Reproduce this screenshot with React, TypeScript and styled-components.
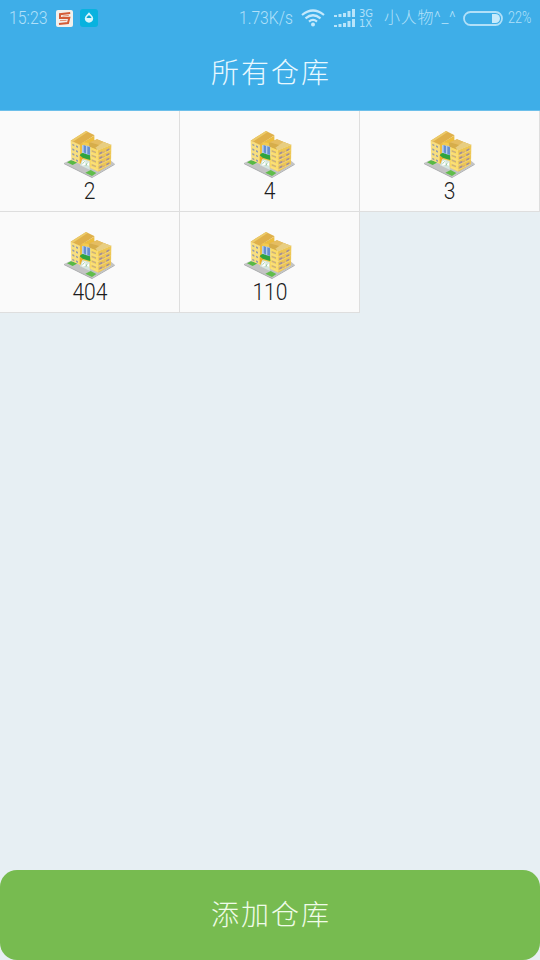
import React from "react";
import styled, { createGlobalStyle } from "styled-components";

const GlobalStyle = createGlobalStyle`
  * { box-sizing: border-box; }
  body { margin: 0; background: #e7eff3; }
`;

const Screen = styled.div`
  display: flex;
  flex-direction: column;
  width: 540px;
  height: 960px;
  overflow: hidden;
  background: #e7eff3;
  font-family: Roboto, "Noto Sans CJK SC", sans-serif;
  font-weight: 300;
`;

const Header = styled.header`
  flex: none;
  height: 111px;
  background: #3eaee8;
  border-bottom: 1px solid #6cbfea;
`;

const StatusBar = styled.div`
  display: flex;
  align-items: center;
  height: 36px;
  padding: 0 9px;
  color: #b1e0f9;
`;

const StatusText = styled.span<{
  $width: number;
  $size?: number;
  $gap?: number;
  $track?: number;
  $narrow?: number;
}>`
  flex: none;
  width: ${(p) => p.$width}px;
  margin-right: ${(p) => p.$gap ?? 0}px;
  font-size: ${(p) => p.$size ?? 18}px;
  letter-spacing: ${(p) => p.$track ?? 0}px;
  line-height: 36px;
  white-space: nowrap;
  transform: scaleX(${(p) => p.$narrow ?? 1});
  transform-origin: left center;
`;

const StatusIcon = styled.svg<{ $gap?: number }>`
  flex: none;
  display: block;
  margin-right: ${(p) => p.$gap ?? 0}px;
`;

const Spacer = styled.div`
  flex: 1;
`;

const Network = styled.div`
  display: grid;
  grid-template-rows: 10px 10px;
  width: 25px;
  padding-top: 1px;
  font-family: "DejaVu Sans", sans-serif;
  font-weight: 400;
  font-size: 10px;
  line-height: 10px;
`;

const Title = styled.h1`
  margin: 0;
  padding: 2px 0 0 2px;
  height: 74px;
  line-height: 72px;
  text-align: center;
  font-size: 28px;
  font-weight: 300;
  letter-spacing: 2px;
  color: #e9f8ff;
`;

const Grid = styled.main`
  flex: 1;
  display: grid;
  grid-template-columns: repeat(3, 180px);
  grid-auto-rows: 101px;
  align-content: start;
`;

const Cell = styled.div`
  display: flex;
  flex-direction: column;
  align-items: center;
  padding: 19px 1px 0 0;
  background: #fafafa;
  border-right: 1px solid #dedede;
  border-bottom: 1px solid #dedede;
`;

const Label = styled.span`
  margin: 1px 0 0 2px;
  font-size: 24px;
  line-height: 24px;
  transform: scaleX(0.88);
  color: #1c1c1c;
`;

const AddButton = styled.button`
  flex: none;
  height: 90px;
  padding: 0 0 5px 2px;
  border: 0;
  border-radius: 17px;
  background: #77bb50;
  color: #f0fbe8;
  font: inherit;
  font-size: 28px;
  letter-spacing: 2px;
`;

const floors = [0, 1, 2, 3];

function Building() {
  return (
    <svg width="52" height="48" viewBox="25 25 156 144">
      <path d="M28 124 L52 113 L170 118 L180 126 L114 165 L104 164 Z" fill="#c3c4c4" />
      <path d="M28 124 L104 162 L114 165 L180 126 L180 129 L112 169 L28 127 Z" fill="#a5a7a9" />
      <path d="M37 122 L49 116 L69 122 L54 130 Z" fill="#57b944" />
      <path d="M92 153 L108 145 L125 154 L112 163 Z" fill="#61bd4a" />
      <path d="M48 57 L75 68 L77 128 L50 114 Z" fill="#f8df80" />
      <path d="M75 68 L119 42 L120 115 L77 128 Z" fill="#ecbd3e" />
      <path d="M48 57 L94 28 L120 41 L75 69 Z" fill="#dfb04a" />
      <path d="M48 57 L94 28 L99 31 L55 60 Z" fill="#ecca69" />
      <path d="M84 62 L109 65 L127 81 L127 145 L77 126 Z" fill="#f3cb50" />
      <path d="M82 70 L109 74 L109 105 L82 95 Z" fill="#b4cdea" />
      <path d="M87 70 L94 73 V96 L87 92 Z M98 74 L106 77 V100 L98 97 Z" fill="#668fd0" />
      <path d="M102 64 L127 53 L167 69 L127 84 L104 75 Z" fill="#d6ad4a" />
      <path d="M105 62 L127 53 L162 67 L141 72 Z" fill="#e5bd61" />
      <path d="M122 78 L146 61 L171 69 L131 86 Z" fill="#e8ce82" />
      <path d="M107 76 L130 86 L131 150 L107 139 Z" fill="#fbdc69" />
      <path d="M130 86 L170 69 L169 128 L131 150 Z" fill="#edc653" />
      <path d="M75 103 L86 106 L86 128 L75 124 Z" fill="#efae2b" />
      <path d="M83 112 L105 118 L105 144 L76 131 Z" fill="#d5e5df" />
      <path d="M75 101 Q81 91 91 96 L106 101 L107 115 L98 113 L84 108 Z" fill="#30a43e" />
      <path d="M83 119 L92 116 V129 L83 132 Z M96 121 L103 124 V132 L96 129 Z" fill="#ffffff" />
      <path d="M84 126 L90 119 M94 132 L98 123" stroke="#79ba79" strokeWidth="2" />
      {floors.map((i) => (
        <g key={i} fill="#949bab">
          <path d={`M53 ${66 + i * 14} l6 3 v5 l-6 -3z`} />
          <path d={`M64 ${71 + i * 14} l6 3 v5 l-6 -3z`} />
        </g>
      ))}
      {floors.map((i) => (
        <g key={i}>
          <path d={`M111 ${85 + i * 14} l13 5 v5 l-13 -5z`} fill="#cbb27d" />
          <path d={`M134 ${93 + i * 14} l9 -4 v6 l-9 4z M155 ${84 + i * 14} l9 -4 v5 l-9 5z`} fill="#a08d9c" />
          <path d={`M144 ${91 + i * 14} l7 -3 v5 l-7 3z`} fill="#d2ab7c" />
          <path d={`M108 ${94 + i * 14} l22 9 l38 -18`} fill="none" stroke="#f7e395" strokeWidth="1.6" />
        </g>
      ))}
    </svg>
  );
}

const warehouses = ["2", "4", "3", "404", "110"];
const signalBars = [2, 3, 4, 6, 8];

export default function App() {
  return (
    <>
      <GlobalStyle />
      <Screen>
        <Header>
          <StatusBar>
            <StatusText $width={39} $gap={8} $narrow={0.88}>15:23</StatusText>
            <StatusIcon width="17" height="17" viewBox="0 0 17 17" $gap={7}>
              <rect width="17" height="17" rx="2" fill="#f3f0ec" />
              <path d="M14.2 3 L4 4.2 L4 8 L13.3 7.8 L12 13 L3 14" fill="none" stroke="#d45b37" strokeWidth="2" />
              <path d="M13 5.3 L6.5 6.2 M10.5 10.4 L4 10.6" stroke="#df7b59" strokeWidth="0.8" />
            </StatusIcon>
            <StatusIcon width="18" height="18" viewBox="0 0 18 18">
              <rect width="18" height="18" rx="3" fill="#08b2df" />
              <path d="M9 3.2 C7.5 5.4 4.8 7 4.8 9.5 C4.8 15 13.2 15 13.2 9.5 C13.2 7 10.5 5.4 9 3.2Z" fill="#d6f5fc" />
              <path d="M6.4 9 Q9 3.5 11.6 9Z" fill="#08a6d1" />
            </StatusIcon>
            <Spacer />
            <StatusText $width={54} $gap={8} $narrow={0.87}>1.73K/s</StatusText>
            <StatusIcon width="24" height="18" viewBox="0 0 24 18" $gap={9}>
              <path d="M1 6 Q12 -3 23 6 M4.5 9.3 Q12 3.2 19.5 9.3 M8 12.6 Q12 9.2 16 12.6" fill="none" stroke="#c4e9fc" strokeWidth="2.2" />
              <circle cx="12" cy="15.5" r="2" fill="#c4e9fc" />
            </StatusIcon>
            <StatusIcon width="22" height="19" viewBox="0 0 22 19" $gap={3}>
              {[8, 18].map((base) =>
                signalBars.map((h, i) => (
                  <rect key={`${base}-${i}`} x={i * 4.5} y={base - h} width="3" height={h} fill="#b9e4fa" />
                )),
              )}
            </StatusIcon>
            <Network>
              <span>3G</span>
              <span>1X</span>
            </Network>
            <StatusText $width={71} $size={16} $gap={8} $track={0.7}>小人物^_^</StatusText>
            <StatusIcon width="40" height="15" viewBox="0 0 40 15" $gap={5}>
              <rect x="1" y="1" width="38" height="13" rx="6.5" fill="none" stroke="#b1e0f8" strokeWidth="1.8" />
              <path d="M29 3 H32.5 A4.5 4.5 0 0 1 32.5 12 H29Z" fill="#c7eafb" />
            </StatusIcon>
            <StatusText $width={23} $size={16} $narrow={0.79}>22%</StatusText>
          </StatusBar>
          <Title>所有仓库</Title>
        </Header>
        <Grid>
          {warehouses.map((name) => (
            <Cell key={name}>
              <Building />
              <Label>{name}</Label>
            </Cell>
          ))}
        </Grid>
        <AddButton>添加仓库</AddButton>
      </Screen>
    </>
  );
}
